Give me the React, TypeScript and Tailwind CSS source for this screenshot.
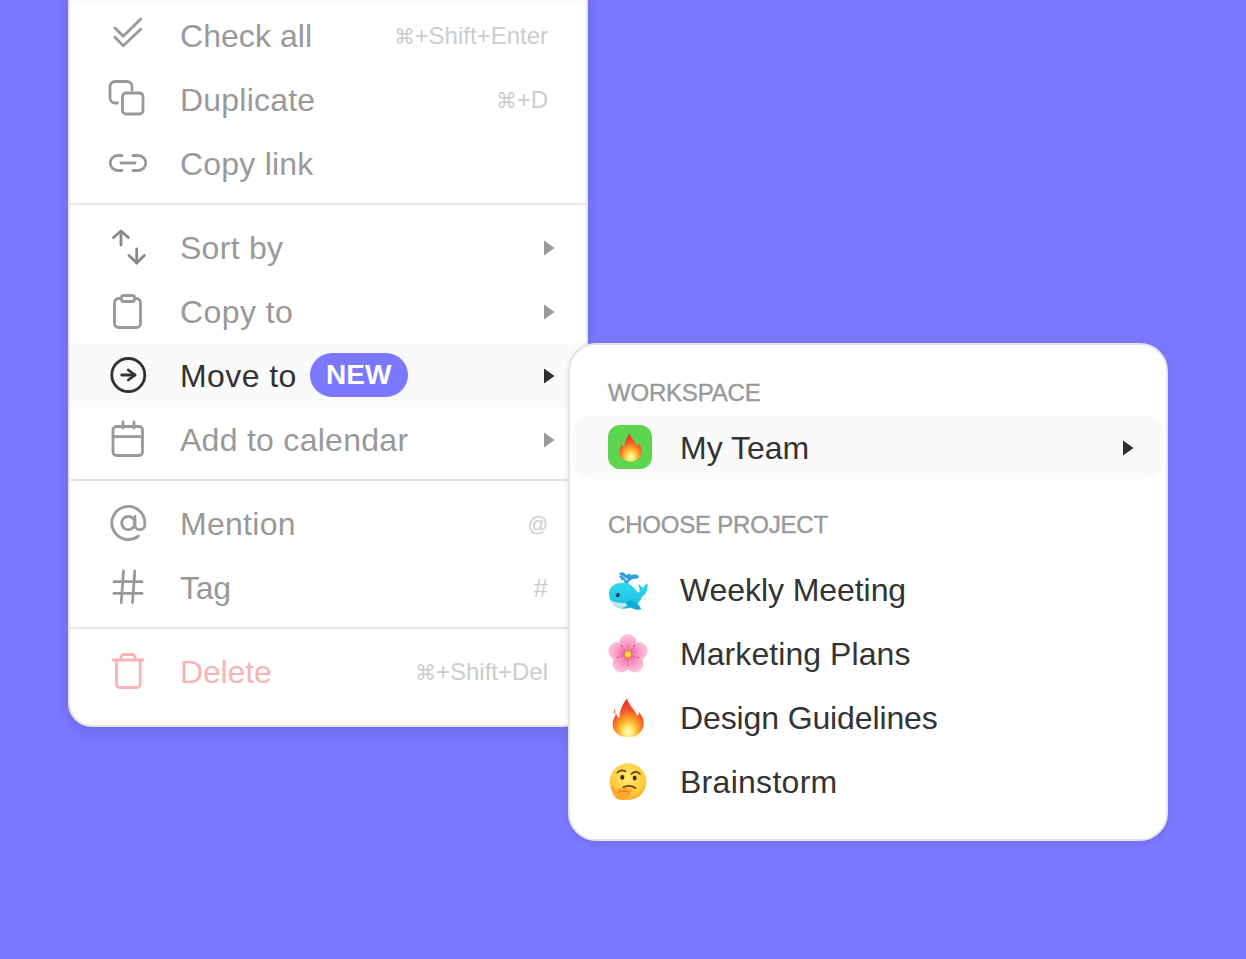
import React from "react";

const P = { fill: "none", stroke: "currentColor", strokeWidth: 2.8, strokeLinecap: "round", strokeLinejoin: "round" } as const;
const Ico = ({ children, cls = "text-[#999999]" }: { children: React.ReactNode; cls?: string }) => (
  <svg width="40" height="40" viewBox="0 0 40 40" className={`shrink-0 ${cls}`} {...P}>{children}</svg>
);

const Tri = ({ dark, cls = "" }: { dark?: boolean; cls?: string }) => (
  <svg width="12" height="16" viewBox="0 0 12 16" className={`${dark ? "text-[#2e2e2e]" : "text-[#999999]"} ${cls}`}>
    <path d="M1 0.5 L11.5 8 L1 15.5 Z" fill="currentColor" />
  </svg>
);

const Fire = ({ size }: { size: number }) => (
  <svg width={size} height={size} viewBox="54 54 120 120">
    <defs>
      <radialGradient id="fireG" cx="50%" cy="86%" r="72%">
        <stop offset="0" stopColor="#fffbe0" />
        <stop offset="0.2" stopColor="#ffe96b" />
        <stop offset="0.46" stopColor="#ffa726" />
        <stop offset="0.78" stopColor="#f5532d" />
        <stop offset="1" stopColor="#ea3d2a" />
      </radialGradient>
    </defs>
    <path
      d="M111 55 C116 76 134 88 142 108 C146 104 147 100 147 96 C157 108 163 120 161 135 C158 158 138 172 115 172 C90 172 69 158 68 136 C67 122 74 112 78 100 C80 108 83 112 88 114 C88 92 98 72 111 55 Z"
      fill="url(#fireG)"
    />
    <path d="M74 86 C72 92 72 98 74 102 C77 98 77 90 74 86 Z" fill="#f4643a" />
  </svg>
);

const Whale = () => (
  <svg width="40" height="40" viewBox="54 30 120 120">
    <defs>
      <linearGradient id="whaleG" x1="0" y1="0" x2="0" y2="1">
        <stop offset="0" stopColor="#34d8ee" />
        <stop offset="1" stopColor="#12bfe0" />
      </linearGradient>
    </defs>
    <path d="M110 72 C106 60 100 54 92 50 M110 72 C112 60 122 52 142 52" fill="none" stroke="#2c9fe0" strokeWidth="7" strokeLinecap="round" />
    <path d="M87 42 C92 34 104 34 108 46 C114 40 120 42 124 46 C132 40 142 42 148 50 C136 50 124 52 112 58 C104 50 96 48 87 42 Z" fill="#2c9fe0" />
    <circle cx="96" cy="58" r="3" fill="#2c9fe0" />
    <path d="M57 100 C57 78 82 66 106 68 C126 70 134 90 147 98 C151 92 147 80 144 72 C152 76 156 80 159 84 C162 78 166 74 173 70 C174 90 168 104 156 110 C150 130 128 146 100 146 C76 146 57 126 57 100 Z" fill="url(#whaleG)" />
    <path d="M62 120 C76 128 98 131 116 127 C114 136 104 144 92 144 C80 143 68 134 62 120 Z" fill="#c6e4e8" />
    <path d="M106 128 C118 118 134 122 144 132 C148 138 152 142 154 148 C140 152 120 146 106 128 Z" fill="#10aad2" />
    <circle cx="83" cy="105" r="6" fill="#11243a" />
    <circle cx="81" cy="103" r="1.8" fill="#ffffff" />
  </svg>
);

const Flower = () => (
  <svg width="40" height="40" viewBox="54 222 120 120">
    <defs>
      <radialGradient id="petalG" cx="50%" cy="85%" r="85%">
        <stop offset="0" stopColor="#ef5f9f" />
        <stop offset="0.5" stopColor="#fa9cc6" />
        <stop offset="1" stopColor="#fdc6de" />
      </radialGradient>
    </defs>
    {[0, 72, 144, 216, 288].map((a) => (
      <ellipse key={a} cx="114" cy="252" rx="27" ry="30" fill="url(#petalG)" transform={`rotate(${a} 114 283)`} />
    ))}
    {[36, 108, 180, 252, 324].map((a) => (
      <g key={a} transform={`rotate(${a} 114 283)`}>
        <path d="M114 270 V252" stroke="#d94c8c" strokeWidth="1.5" />
        <circle cx="114" cy="250" r="2" fill="#8a2a5a" />
      </g>
    ))}
    <circle cx="114" cy="283" r="13" fill="#e8823a" />
    <circle cx="114" cy="283" r="9" fill="#f8d84e" />
  </svg>
);

const Think = () => (
  <svg width="40" height="40" viewBox="54 246 120 120">
    <defs>
      <radialGradient id="thinkG" cx="50%" cy="38%" r="65%">
        <stop offset="0" stopColor="#ffec70" />
        <stop offset="0.7" stopColor="#fecb3c" />
        <stop offset="1" stopColor="#f8a41e" />
      </radialGradient>
    </defs>
    <circle cx="114" cy="305" r="55" fill="url(#thinkG)" />
    <path d="M82 278 C88 270 98 270 106 274" fill="none" stroke="#6a3c10" strokeWidth="5" strokeLinecap="round" />
    <path d="M124 282 C132 274 142 274 150 282" fill="none" stroke="#6a3c10" strokeWidth="5" strokeLinecap="round" />
    <ellipse cx="97" cy="292" rx="6" ry="7.5" fill="#4a2c10" />
    <ellipse cx="134" cy="294" rx="6" ry="7.5" fill="#4a2c10" />
    <path d="M100 322 C112 316 124 316 136 324" fill="none" stroke="#6a3c10" strokeWidth="5" strokeLinecap="round" />
    <path d="M62 322 C66 318 72 320 76 330 C84 326 100 322 122 326 C130 328 128 336 120 336 C124 340 122 346 116 346 C118 350 114 354 110 354 C108 360 92 362 84 358 C72 354 66 338 62 322 Z" fill="#fba92c" />
    <path d="M84 338 C94 332 106 332 118 336" fill="none" stroke="#d87412" strokeWidth="3" strokeLinecap="round" />
  </svg>
);

const Row = ({
  icon,
  label,
  hint,
  hintCls = "text-[24px]",
  cmd,
  track = "",
  arrow,
  active,
  danger,
  badge,
}: {
  icon: React.ReactNode;
  label: string;
  hint?: string;
  hintCls?: string;
  cmd?: boolean;
  track?: string;
  arrow?: boolean;
  active?: boolean;
  danger?: boolean;
  badge?: boolean;
}) => (
  <div className={`flex h-16 items-center pl-[38px] ${arrow ? "pr-[31px]" : "pr-[38px]"} ${active ? "-mt-px mb-px bg-[#fafafa] pt-[2px]" : ""}`}>
    {icon}
    <span className={`ml-[32px] text-[32px] leading-none ${track} ${active ? "text-[#333333]" : danger ? "text-[#f9b3b3]" : "text-[#999999]"}`}>{label}</span>
    {badge && (
      <span className="mb-[2px] ml-[13px] flex h-[44px] w-[98px] items-center justify-center rounded-full bg-[#7b78ff] text-[28px] font-bold text-white">NEW</span>
    )}
    <div className="flex-1" />
    {hint && (
      <span className={`${hintCls} text-[#cccccc]`}>
        {cmd && <span className="text-[21px]">⌘</span>}
        {hint}
      </span>
    )}
    {arrow && <Tri dark={active} />}
  </div>
);

const Sep = () => <div className="mb-[11px] mt-[7px] h-[2px] bg-[#e5e5e5]" />;

const Sub = ({ icon, label, track = "" }: { icon: React.ReactNode; label: string; track?: string }) => (
  <div className="flex h-16 items-center pl-[36px]">
    <div className="w-[44px]">{icon}</div>
    <span className={`ml-[28px] text-[32px] leading-none text-[#333333] ${track}`}>{label}</span>
  </div>
);

const Label = ({ children, cls }: { children: React.ReactNode; cls: string }) => (
  <div className={`${cls} h-7 pl-[36px] text-[24px] leading-7 tracking-[-0.2px] text-[#999999] [-webkit-text-stroke:0.4px_#999999]`}>{children}</div>
);

export default function App() {
  return (
    <div className="relative h-[959px] w-[1246px] overflow-hidden bg-[#7b78ff]" style={{ fontFamily: '"Liberation Sans", Arial, sans-serif' }}>
      <div className="-mt-10 ml-[68px] flex w-[520px] flex-col overflow-hidden rounded-[24px] border-2 border-[#e5e5e5] bg-white pb-[21px] shadow-[0_6px_14px_rgba(40,40,120,0.18)]">
        <div className="h-[42px] bg-[#fafafa]" />
        <Row label="Check all" cmd hint="+Shift+Enter" track="tracking-[0.05px]" icon={<Ico><path d="M7 12 L15.3 20.3 L32.7 3" /><path d="M7 21.3 L15.3 29.7 L32.7 13.3" /></Ico>} />
        <Row label="Duplicate" cmd hint="+D" track="tracking-[0.22px]" icon={<Ico><rect x="14.5" y="13" width="20.5" height="21" rx="3.5" /><path d="M24 10 V6.5 a5 5 0 0 0 -5 -5 H7 a5 5 0 0 0 -5 5 V18 a5 5 0 0 0 5 5 h2.5" /></Ico>} />
        <Row label="Copy link" track="tracking-[0.22px]" icon={<Ico><path d="M14 11.5 H9.7 a7.5 7.5 0 0 0 0 15 H14" /><path d="M25 11.5 h5.3 a7.5 7.5 0 0 1 0 15 H25" /><path d="M13 19 H27" /></Ico>} />
        <Sep />
        <Row label="Sort by" arrow track="tracking-[0.28px]" icon={<Ico cls="text-[#888888]"><path d="M13 4 V17" /><path d="M5.5 9.5 L13 3 L20.3 9.5" /><path d="M28.7 21 V35" /><path d="M21 27.5 L28.7 35 L36.3 27.5" /></Ico>} />
        <Row label="Copy to" arrow track="tracking-[0.42px]" icon={<Ico><rect x="6.5" y="6.5" width="26" height="29" rx="4" /><rect x="13.5" y="3.5" width="13" height="6" rx="2" fill="#ffffff" /></Ico>} />
        <Row label="Move to" arrow active badge track="tracking-[0.42px]" icon={<Ico cls="text-[#333333]"><circle cx="20.3" cy="19" r="16.5" /><path d="M13.7 19 H27" /><path d="M20.3 14 L27 19 L20.3 24" /></Ico>} />
        <Row label="Add to calendar" arrow track="tracking-[0.28px]" icon={<Ico><rect x="5" y="6.5" width="29.5" height="29" rx="3.5" /><path d="M5 16.7 H34.5" /><path d="M15 2 V8" /><path d="M26 2 V8" /></Ico>} />
        <Sep />
        <Row label="Mention" hint="@" hintCls="text-[20px]" track="tracking-[0.28px]" icon={<Ico><circle cx="20.3" cy="19" r="6.6" /><path d="M26.9 12.4 v8.25 a4.95 4.95 0 0 0 9.9 0 v-1.65 a16.5 16.5 0 1 0 -6.47 13.1" /></Ico>} />
        <Row label="Tag" hint="#" hintCls="text-[26px]" track="tracking-[-0.3px]" icon={<Ico><path d="M6 13.7 H34" /><path d="M6 25.3 H34" /><path d="M15.5 3 L13.2 34.5" /><path d="M26.8 3 L24.5 34.5" /></Ico>} />
        <Sep />
        <Row label="Delete" danger cmd hint="+Shift+Del" track="tracking-[-0.15px]" icon={<Ico cls="text-[#f9b3b3]"><path d="M5 8 H35" /><path d="M13 8 V5.5 a3 3 0 0 1 3 -3 h8 a3 3 0 0 1 3 3 V8" /><path d="M8.5 8 V32.5 a3 3 0 0 0 3 3 h17.7 a3 3 0 0 0 3 -3 V8" /></Ico>} />
      </div>

      <div className="absolute left-[568px] top-[343px] flex h-[498px] w-[600px] flex-col rounded-[28px] border-2 border-[#e5e5e5] bg-white px-[2px] shadow-[0_2px_6px_rgba(40,40,120,0.12)]">
        <Label cls="mt-[34px]">WORKSPACE</Label>
        <div className="mt-[8px] flex h-16 items-center rounded-[20px] bg-[#fafafa] pl-[36px] pr-[30px]">
          <div className="flex h-[44px] w-[44px] items-center justify-center rounded-[12px] bg-[#5dd54f]"><Fire size={29} /></div>
          <span className="ml-[28px] mt-[2px] text-[32px] leading-none text-[#333333]">My Team</span>
          <div className="flex-1" />
          <Tri dark cls="mt-[2px]" />
        </div>
        <Label cls="mt-[32px]">CHOOSE PROJECT</Label>
        <div className="mt-[19px] flex flex-col">
          <Sub label="Weekly Meeting" track="tracking-[-0.07px]" icon={<Whale />} />
          <Sub label="Marketing Plans" track="tracking-[0.07px]" icon={<Flower />} />
          <Sub label="Design Guidelines" track="tracking-[-0.12px]" icon={<Fire size={40} />} />
          <Sub label="Brainstorm" track="tracking-[0.28px]" icon={<Think />} />
        </div>
      </div>
    </div>
  );
}
